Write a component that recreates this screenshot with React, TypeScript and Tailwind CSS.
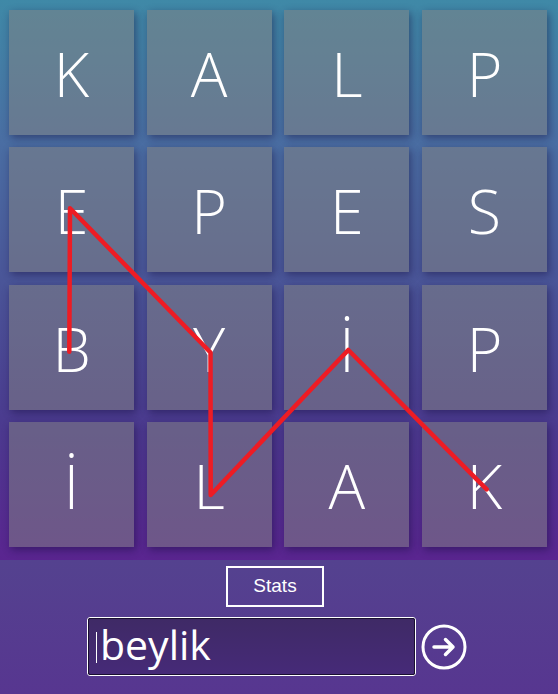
import React from "react";

const letters = [
  "K", "A", "L", "P",
  "E", "P", "E", "S",
  "B", "Y", "İ", "P",
  "İ", "L", "A", "K",
];

export default function App() {
  return (
    <div
      className="w-[558px] h-[694px] flex flex-col overflow-hidden"
      style={{ fontFamily: '"Open Sans", "Noto Sans", sans-serif' }}
    >
      <div className="relative h-[560px] bg-[linear-gradient(180deg,#3f89a7_0%,#4a6ea3_25%,#4a5598_50%,#4b3b8f_75%,#5a2590_100%)]">
        <div className="grid grid-cols-[125px_125px_125px_125px] gap-x-[12.67px] gap-y-[12.33px] pl-[9px] pt-[10px]">
          {letters.map((l, i) => (
            <div
              key={i}
              className="h-[125px] w-[125px] bg-[rgba(131,131,131,0.52)] shadow-[2px_3px_8px_rgba(20,10,60,0.45)] flex items-center justify-center pt-[3px] text-white font-light text-[61px] leading-[60px]"
            >
              {l}
            </div>
          ))}
        </div>
        <svg
          className="absolute left-0 top-0 pointer-events-none"
          width="558"
          height="560"
          viewBox="0 0 558 560"
        >
          <polyline
            points="69.3,351.7 70,208.3 210.5,352.5 210.7,495 348.3,350 486.7,489.3"
            fill="none"
            stroke="#ed1c24"
            strokeWidth="4.5"
            strokeLinejoin="round"
            strokeLinecap="round"
          />
        </svg>
      </div>
      <div className="flex-1 flex flex-col items-start bg-[linear-gradient(180deg,#54428f_0%,#573690_100%)]">
        <div
          className="ml-[226px] mt-[6px] w-[98px] h-[41px] border-2 border-white flex items-center justify-center text-white text-[19px]"
          style={{ fontFamily: '"Liberation Sans", Arial, sans-serif' }}
        >
          Stats
        </div>
        <div className="flex items-center ml-[87px] mt-[10px] gap-[5px]">
          <div className="w-[329px] h-[59px] rounded-[3px] border border-white bg-[#1a1030]">
            <div className="w-full h-full rounded-[2px] border border-[#1a1030] bg-[linear-gradient(180deg,#3f2a66_0%,#462a78_100%)] flex items-center pl-[7px]">
              <span className="w-[1px] h-[31px] bg-white mr-[3px] mt-[1px]" />
              <span className="text-white text-[41px] leading-none pb-[5px]">beylik</span>
            </div>
          </div>
          <svg width="46" height="46" viewBox="0 0 46 46">
            <circle cx="23" cy="23" r="21" fill="none" stroke="white" strokeWidth="3" />
            <path
              d="M13 23 H32 M24.5 15.5 L32 23 L24.5 30.5"
              fill="none"
              stroke="white"
              strokeWidth="3.5"
              strokeLinecap="round"
              strokeLinejoin="round"
            />
          </svg>
        </div>
      </div>
    </div>
  );
}
